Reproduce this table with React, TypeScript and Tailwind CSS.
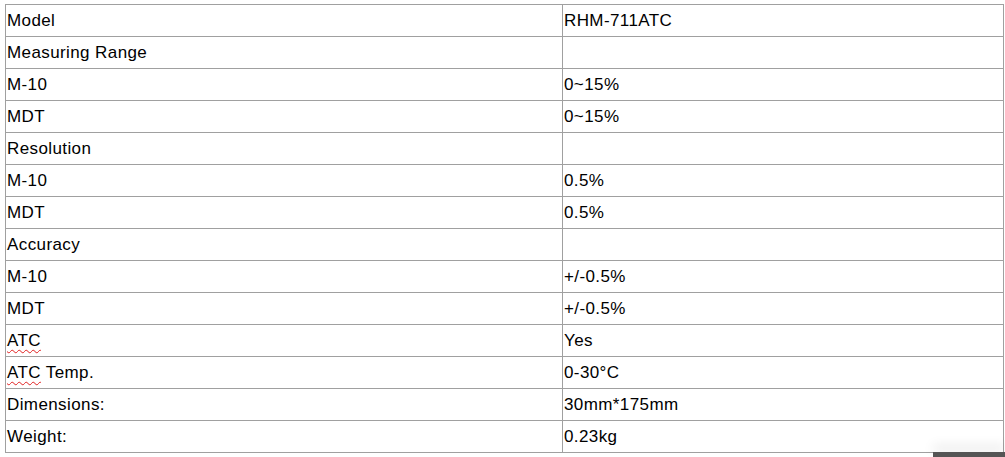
import React from 'react';

const rows: [string, string, boolean?][] = [
  ['Model', 'RHM-711ATC'],
  ['Measuring Range', ''],
  ['M-10', '0~15%'],
  ['MDT', '0~15%'],
  ['Resolution', ''],
  ['M-10', '0.5%'],
  ['MDT', '0.5%'],
  ['Accuracy', ''],
  ['M-10', '+/-0.5%'],
  ['MDT', '+/-0.5%'],
  ['ATC', 'Yes', true],
  ['ATC Temp.', '0-30°C', true],
  ['Dimensions:', '30mm*175mm'],
  ['Weight:', '0.23kg'],
];

const Label = ({ text, squiggle }: { text: string; squiggle?: boolean }) => {
  if (!squiggle) return <>{text}</>;
  const [first, ...rest] = text.split(' ');
  return (
    <>
      <span className="underline decoration-wavy decoration-[#e02020] decoration-1 underline-offset-[3px]">{first}</span>
      {rest.length ? ' ' + rest.join(' ') : ''}
    </>
  );
};

const App = () => {
  return (
    <div className="relative w-[1005px] h-[457px] overflow-hidden bg-white pt-[4px] pl-[5px] font-['Liberation_Sans',Arial,sans-serif] text-[17px] tracking-[0.4px] text-black">
      <table className="w-[999px] border-collapse table-fixed">
        <colgroup>
          <col className="w-[557px]" />
          <col />
        </colgroup>
        <tbody>
          {rows.map(([k, v, sq], i) => (
            <tr key={i} className="h-[32px]">
              <td className="border border-[#a0a0a0] pl-[1px] py-0 leading-[19px] align-middle">
                <Label text={k} squiggle={sq} />
              </td>
              <td className="border border-[#a0a0a0] pl-[1px] py-0 leading-[19px] align-middle">{v}</td>
            </tr>
          ))}
        </tbody>
      </table>
      <div className="absolute right-0 bottom-0 w-[72px] h-[5px] bg-[#555] shadow-[0_-6px_12px_rgba(0,0,0,0.12)]" />
    </div>
  );
};

export default App;
